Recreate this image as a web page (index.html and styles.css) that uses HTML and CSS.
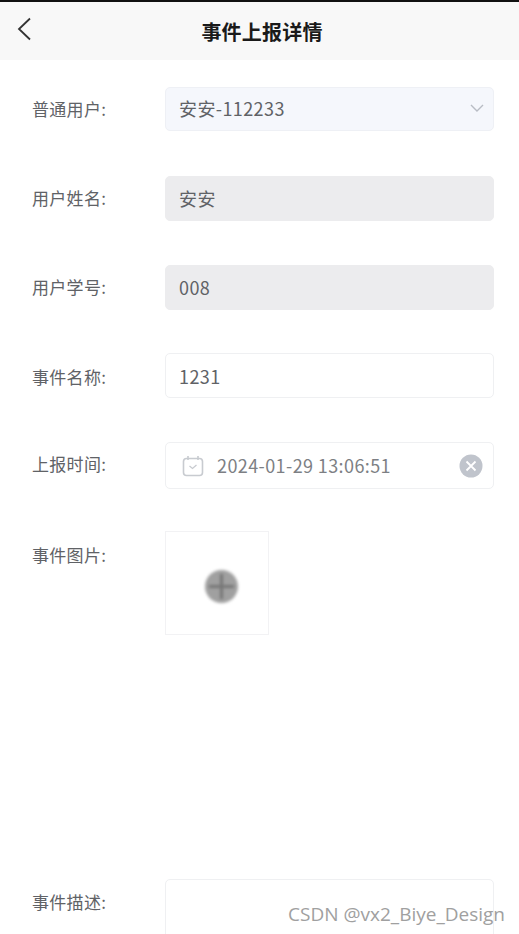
FILE: index.html
```html
<!DOCTYPE html>
<html lang="zh-CN">
<head>
    <meta charset="UTF-8">
    <meta name="viewport" content="width=device-width, initial-scale=1.0">
    <title>事件上报详情</title>
    <link rel="stylesheet" href="styles.css">
</head>
<body>
    <div class="page">
        <!-- Header -->
        <div class="nav-bar">
            <svg class="back-icon" width="16" height="26" viewBox="0 0 16 26" fill="none">
                <path d="M14 2.5 L3 13 L14 23.5" stroke="#333" stroke-width="1.8"/>
            </svg>
            <h1>事件上报详情</h1>
        </div>

        <!-- Form -->
        <div class="form">
            <div class="form-row row-select">
                <label>普通用户:</label>
                <div class="field field-select">
                    <span>安安-112233</span>
                    <svg class="arrow-icon" width="14" height="8" viewBox="0 0 14 8" fill="none">
                        <path d="M1 1 L7 7 L13 1" stroke="#b8bcc4" stroke-width="1.4"/>
                    </svg>
                </div>
            </div>
            <div class="form-row row-plain">
                <label>用户姓名:</label>
                <div class="field field-disabled">安安</div>
            </div>
            <div class="form-row row-number">
                <label>用户学号:</label>
                <div class="field field-disabled">008</div>
            </div>
            <div class="form-row row-plain">
                <label class="label-low">事件名称:</label>
                <div class="field field-input">1231</div>
            </div>
            <div class="form-row row-date">
                <label>上报时间:</label>
                <div class="field field-date">
                    <svg class="date-icon" width="22" height="22" viewBox="0 0 22 22" fill="none" stroke="#c8cbd0" stroke-width="1.6">
                        <rect x="1.5" y="3.5" width="19" height="17" rx="3"/>
                        <path d="M6 1 V5 M16 1 V5"/>
                        <path d="M7.5 11 L10.5 13.5 L14.5 10" stroke-width="1.3"/>
                    </svg>
                    <span class="date-text">2024-01-29 13:06:51</span>
                    <span class="clear-btn">
                        <svg width="24" height="24" viewBox="0 0 24 24" fill="none">
                            <circle cx="12" cy="12" r="11.5" fill="#c0c4cc"/>
                            <path d="M7.5 7.5 L16.5 16.5 M16.5 7.5 L7.5 16.5" stroke="#fff" stroke-width="1.8"/>
                        </svg>
                    </span>
                </div>
            </div>
            <div class="form-row row-image">
                <label class="label-low">事件图片:</label>
                <div class="upload-box">
                    <span class="upload-plus"></span>
                </div>
            </div>
            <div class="form-row row-desc">
                <label class="label-mid">事件描述:</label>
                <div class="field field-textarea"></div>
            </div>
        </div>

        <div class="watermark">CSDN @vx2_Biye_Design</div>
    </div>
</body>
</html>
```

FILE: styles.css
```css
/* General Styling */
* {
    margin: 0;
    padding: 0;
    box-sizing: border-box;
    font-family: "Noto Sans CJK SC", "Open Sans", sans-serif;
}

html, body {
    height: 100%;
    overflow: hidden;
    background: #ffffff;
}

.page {
    position: relative;
    height: 934px;
    overflow: hidden;
    border-top: 2px solid #111111;
}

/* Header */
.nav-bar {
    display: flex;
    align-items: center;
    justify-content: center;
    position: relative;
    height: 58px;
    background-color: #f8f8f8;
}

.nav-bar h1 {
    font-size: 20px;
    font-weight: 700;
    letter-spacing: 0.2px;
    color: #1a1a1a;
    margin-left: 5px;
}

.back-icon {
    position: absolute;
    left: 16px;
    top: 14px;
}

/* Form */
.form {
    padding: 27px 25px 0 32px;
}

.form-row {
    display: flex;
    align-items: flex-start;
}

.form-row label {
    width: 133px;
    flex-shrink: 0;
    font-size: 17px;
    letter-spacing: 0.3px;
    line-height: 24px;
    color: #606266;
    padding-top: 10px;
}

.form-row .label-low {
    padding-top: 12px;
}

.form-row .label-mid {
    padding-top: 11px;
}

.row-select {
    margin-bottom: 45px;
}

.row-plain {
    margin-bottom: 44px;
}

.row-number {
    margin-bottom: 43px;
}

.row-date {
    margin-bottom: 42px;
}

.field {
    display: flex;
    align-items: center;
    flex: 1;
    height: 45px;
    padding: 0 13px 2px;
    font-size: 18px;
    letter-spacing: 0.4px;
    color: #606266;
    background: #ffffff;
    border: 1px solid #eff0f2;
    border-radius: 5px;
}

.field-select {
    justify-content: space-between;
    height: 44px;
    background: #f5f7fc;
    border-color: #eef0f5;
}

.arrow-icon {
    margin-right: -4px;
}

.field-disabled {
    background: #ececee;
    border-color: #ececee;
}

.field-input {
    padding-bottom: 0;
}

.field-date {
    height: 47px;
    padding: 0 10px 0 16px;
}

.date-text {
    flex: 1;
    margin-left: 13px;
    margin-bottom: 2px;
    color: #7d7f84;
}

.clear-btn {
    display: flex;
}

/* Upload */
.row-image {
    margin-bottom: 244px;
}

.upload-box {
    display: flex;
    align-items: center;
    justify-content: center;
    width: 104px;
    height: 104px;
    border: 1px solid #f2f2f4;
}

.upload-plus {
    position: relative;
    display: block;
    width: 33px;
    height: 33px;
    margin: 6px 0 0 9px;
    border-radius: 50%;
    background: #a0a0a0;
    filter: blur(1.4px);
}

.upload-plus::before,
.upload-plus::after {
    content: "";
    position: absolute;
    background: #767676;
}

.upload-plus::before {
    left: 4px;
    right: 4px;
    top: 15px;
    height: 3px;
}

.upload-plus::after {
    top: 4px;
    bottom: 4px;
    left: 15px;
    width: 3px;
}

.field-textarea {
    height: 120px;
}

/* Overlay */
.watermark {
    position: absolute;
    right: 14px;
    top: 899px;
    font-family: "Open Sans", sans-serif;
    font-size: 19px;
    color: #a0a0a0;
    white-space: nowrap;
}
```
